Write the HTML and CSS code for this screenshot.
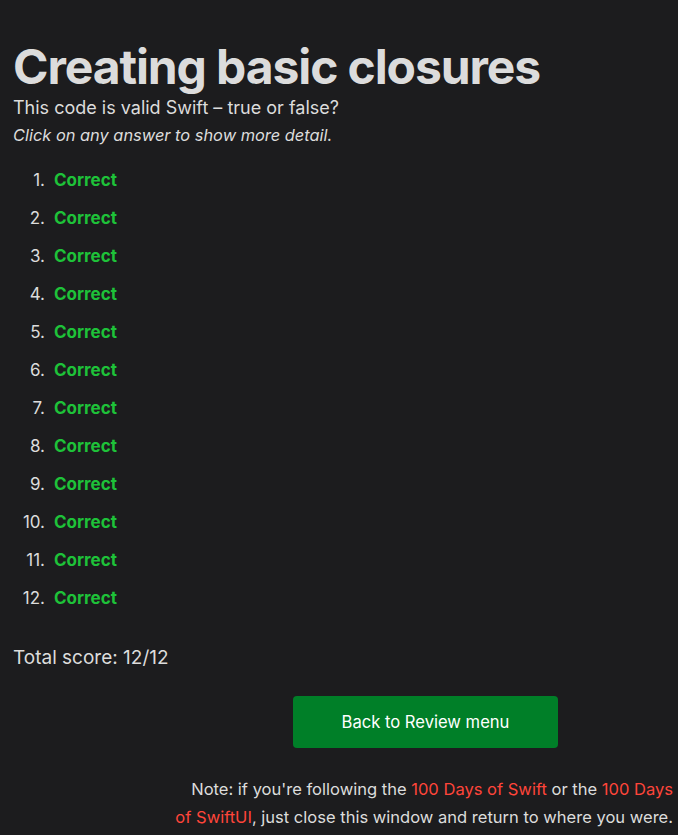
FILE: index.html
```html
<!DOCTYPE html>
<html>
<head>
<meta charset="utf-8">
<link rel="stylesheet" href="styles.css">
</head>
<body>
<main class="page">
  <h1 class="title">Creating basic closures</h1>
  <p class="lead">This code is valid Swift – true or false?</p>
  <p class="hint">Click on any answer to show more detail.</p>
  <ol class="answers">
    <li><span class="ok">Correct</span></li>
    <li><span class="ok">Correct</span></li>
    <li><span class="ok">Correct</span></li>
    <li><span class="ok">Correct</span></li>
    <li><span class="ok">Correct</span></li>
    <li><span class="ok">Correct</span></li>
    <li><span class="ok">Correct</span></li>
    <li><span class="ok">Correct</span></li>
    <li><span class="ok">Correct</span></li>
    <li><span class="ok">Correct</span></li>
    <li><span class="ok">Correct</span></li>
    <li><span class="ok">Correct</span></li>
  </ol>
  <p class="score">Total score: 12/12</p>
  <div class="actions">
    <a class="btn" href="#">Back to Review menu</a>
  </div>
  <p class="note">Note: if you're following the <a href="#">100 Days of Swift</a> or the <a href="#">100 Days of SwiftUI</a>, just close this window and return to where you were.</p>
</main>
</body>
</html>
```
FILE: styles.css
```css
html, body {
  margin: 0;
  padding: 0;
  background: #1c1c1e;
}
body {
  font-family: Inter, "Noto Sans", sans-serif;
  color: #dcdcdc;
}
.page {
  padding: 39px 5px 0 13px;
}
.title {
  margin: 0;
  font-size: 48px;
  font-weight: 700;
  line-height: 56px;
  letter-spacing: -1.1px;
}
.lead {
  margin: 0;
  font-size: 18px;
  line-height: 26px;
}
.hint {
  margin: 0;
  font-size: 16.4px;
  font-style: italic;
  line-height: 28px;
}
.answers {
  margin: 19px 0 0;
  padding: 0;
  list-style: none;
  counter-reset: item;
  font-size: 17px;
}
.answers li {
  display: flex;
  line-height: 24px;
  margin-bottom: 14px;
  counter-increment: item;
}
.answers li::before {
  content: counter(item) ".";
  min-width: 32px;
  text-align: right;
  margin-right: 9px;
}
.ok {
  color: #1ec239;
  font-weight: 700;
}
.score {
  margin: 35px 0 0;
  font-size: 19px;
  line-height: 26px;
}
.actions {
  display: flex;
  margin-top: 25px;
  padding-left: 280px;
}
.btn {
  display: block;
  width: 265px;
  height: 52px;
  line-height: 52px;
  text-align: center;
  background: #007f28;
  color: #fff;
  border-radius: 4px;
  text-decoration: none;
  font-size: 16.6px;
}
.note {
  margin: 27px 0 0 160px;
  text-align: right;
  font-size: 16.55px;
  line-height: 28px;
}
.note a {
  color: #ff453a;
  text-decoration: none;
}
```
